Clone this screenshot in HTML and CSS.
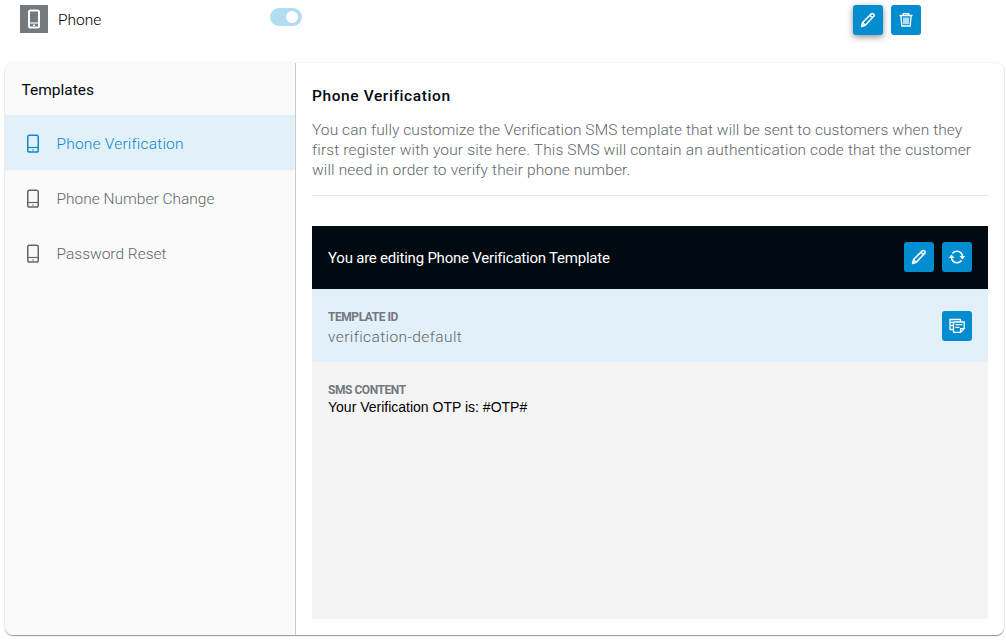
FILE: index.html
```html
<!DOCTYPE html>
<html lang="en">
<head>
<meta charset="utf-8">
<title>Phone templates</title>
<link rel="stylesheet" href="styles.css">
</head>
<body>
<svg class="defs" width="0" height="0" aria-hidden="true">
  <symbol id="phone" viewBox="0 0 14 20">
    <rect x="1.75" y="1.25" width="10.500" height="16.800" rx="1.800" fill="none" stroke="currentColor" stroke-width="1.500"/>
    <path d="M2 13.500h10" stroke="currentColor" stroke-width="1.200"/>
    <path d="M6.200 16h1.600" stroke="currentColor" stroke-width="1.200"/>
  </symbol>
  <symbol id="phone-bold" viewBox="0 0 14 20">
    <rect x="2" y="1.500" width="10" height="17" rx="1.500" fill="none" stroke="currentColor" stroke-width="2"/>
    <path d="M2 14h10" stroke="currentColor" stroke-width="1.200"/>
    <path d="M6 16.300h2" stroke="currentColor" stroke-width="1.400"/>
  </symbol>
  <symbol id="pencil" viewBox="0 0 16 16">
    <path d="M1.600 14.400l1-3.900L11.300 1.900q1.100-.9 2.200 .1t.2 2.300L5.200 13.200zM10 3.300l2.500 2.500M2.700 10.700l2.500 2.500" fill="none" stroke="currentColor" stroke-width="1.600" stroke-linejoin="round"/>
  </symbol>
  <symbol id="trash" viewBox="0 0 16 16">
    <path d="M1.500 3.500h13M5.300 3.500V1.600h5.400v1.900M3 4.200l.8 9.800h8.400l.8-9.800M6 5.500v6.700M8 5.500v6.700M10 5.500v6.700" fill="none" stroke="currentColor" stroke-width="1.400" stroke-linejoin="round"/>
  </symbol>
  <symbol id="sync" viewBox="0 0 16 16">
    <path d="M3.400 4.400C5.500 1.700 9.800 1.600 12 3.900Q13.300 5.300 13.500 7.500M12.600 11.600C10.500 14.300 6.200 14.400 4 12.100Q2.700 10.700 2.500 8.500" fill="none" stroke="currentColor" stroke-width="1.600"/>
    <path d="M10.500 7H16.200l-2.700 3.500zM5.500 9H-.2l2.700-3.500z" fill="currentColor"/>
  </symbol>
  <symbol id="copy" viewBox="0 0 16 16">
    <path d="M4 11.500H1V1.500h10.500V3.500M1 4.300h3M1 7.500h3M4.500 4h10.700v6.800l-3.500 3.500H4.500zM15 10.700h-3.400v3.400M6.500 6.700h6.800M6.500 9.300h4" fill="none" stroke="currentColor" stroke-width="1.300" stroke-linejoin="round"/>
  </symbol>
</svg>
<header class="channel">
  <span class="channel-icon"><svg class="phone-icon"><use href="#phone-bold"/></svg></span>
  <span class="channel-name">Phone</span>
  <span class="toggle"><span class="toggle-knob"></span></span>
  <div class="channel-actions">
    <button class="btn btn-raised"><svg><use href="#pencil"/></svg></button>
    <button class="btn"><svg><use href="#trash"/></svg></button>
  </div>
</header>
<main class="panel">
  <nav class="sidebar">
    <h2 class="sidebar-title">Templates</h2>
    <a class="item item-active"><svg class="phone-icon"><use href="#phone"/></svg><span>Phone Verification</span></a>
    <a class="item"><svg class="phone-icon"><use href="#phone"/></svg><span>Phone Number Change</span></a>
    <a class="item"><svg class="phone-icon"><use href="#phone"/></svg><span>Password Reset</span></a>
  </nav>
  <section class="content">
    <h1 class="title">Phone Verification</h1>
    <p class="intro"><span class="intro-first">You can fully customize the Verification SMS template that will be sent to customers when they</span><br>first register with your site here. This SMS will contain an authentication code that the customer<br>will need in order to verify their phone number.</p>
    <div class="editor">
      <div class="editor-head">
        <span class="editor-title">You are editing Phone Verification Template</span>
        <div class="editor-actions">
          <button class="btn"><svg><use href="#pencil"/></svg></button>
          <button class="btn"><svg><use href="#sync"/></svg></button>
        </div>
      </div>
      <div class="editor-id">
        <div class="id-text">
          <div class="label">TEMPLATE ID</div>
          <div class="id-value">verification-default</div>
        </div>
        <button class="btn"><svg><use href="#copy"/></svg></button>
      </div>
      <div class="editor-body">
        <div class="label">SMS CONTENT</div>
        <div class="sms">Your Verification OTP is: #OTP#</div>
      </div>
    </div>
  </section>
</main>
</body>
</html>
```
FILE: styles.css
```css
* { box-sizing: border-box; }
body {
  margin: 0;
  width: 1006px;
  height: 641px;
  overflow: hidden;
  background: #fff;
  color: #02080f;
  font-family: Roboto, sans-serif;
  font-size: 15.5px;
  font-weight: 300;
}
h1, h2, p { margin: 0; }
.defs { display: block; }
.channel {
  display: flex;
  align-items: flex-start;
  height: 63px;
  padding: 5px 85px 0 20px;
}
.channel-icon {
  display: flex;
  align-items: center;
  justify-content: center;
  width: 28px;
  height: 28px;
  background: #73797d;
  color: #fff;
}
.channel-name {
  width: 212px;
  padding-left: 10px;
  color: #000;
  line-height: 30px;
}
.toggle {
  display: flex;
  justify-content: flex-end;
  width: 32px;
  height: 18px;
  margin: 3px 0 0 10px;
  padding: 3px 4px;
  border-radius: 9px;
  background: #b1dcf1;
}
.toggle-knob { width: 12px; height: 12px; border-radius: 50%; background: #fff; }
.channel-actions, .editor-actions { display: flex; gap: 8px; margin-left: auto; }
.btn {
  display: flex;
  align-items: center;
  justify-content: center;
  width: 30px;
  height: 30px;
  padding: 0;
  border: 0;
  border-radius: 3px;
  background: #028dd0;
  color: #fff;
}
.btn svg { width: 16px; height: 16px; overflow: visible; }
.btn-raised { box-shadow: 0 2px 6px rgba(0, 0, 0, .45); }
.panel {
  display: flex;
  width: 999px;
  height: 572px;
  margin-left: 5px;
  border-radius: 8px;
  background: #fff;
  box-shadow: 0 1px 1px rgba(0, 0, 0, .4), 0 0 2px rgba(0, 0, 0, .12);
}
.sidebar {
  width: 291px;
  border-right: 1px solid #ccc;
  border-radius: 8px 0 0 8px;
  background: #fafafa;
}
.sidebar-title {
  height: 52px;
  padding-left: 16.5px;
  font-size: 15.5px;
  font-weight: 400;
  line-height: 54px;
}
.item {
  display: flex;
  align-items: center;
  gap: 16.5px;
  height: 55px;
  padding: 2px 0 0 21px;
  color: #60666a;
}
.phone-icon { width: 14px; height: 20px; }
.item-active { background: #e2f1f9; color: #0b89cd; letter-spacing: .2px; }
.content {
  flex: 1;
  padding: 23px 16px 16px;
}
.title { font-size: 15.5px; font-weight: 500; letter-spacing: .6px; line-height: 20px; }
.intro {
  height: 90px;
  padding-top: 14px;
  border-bottom: 1px solid #e6e8e9;
  color: #60666a;
  letter-spacing: .15px;
  line-height: 20px;
  white-space: nowrap;
}
.intro-first { letter-spacing: .08px; }
.editor {
  display: flex;
  flex-direction: column;
  height: 393px;
  margin-top: 30px;
}
.editor-head {
  display: flex;
  align-items: center;
  height: 63px;
  padding: 0 16px;
  background: #010911;
  color: #fff;
}
.editor-actions { margin-top: -2px; }
.editor-title { font-size: 15px; font-weight: 400; letter-spacing: -.22px; }
.editor-id {
  display: flex;
  align-items: center;
  justify-content: space-between;
  height: 73px;
  padding: 0 16px;
  background: #e2f1f9;
}
.id-text { padding-top: 2px; }
.label { color: #73797d; font-size: 12px; font-weight: 700; letter-spacing: -.45px; line-height: 20px; }
.id-value { color: #60666a; letter-spacing: .4px; line-height: 20px; }
.editor-body { flex: 1; padding: 18px 16px; background: #f4f4f4; }
.sms {
  color: #000;
  font-family: "Liberation Sans", Arial, sans-serif;
  font-size: 14px;
  line-height: 15px;
}
```
